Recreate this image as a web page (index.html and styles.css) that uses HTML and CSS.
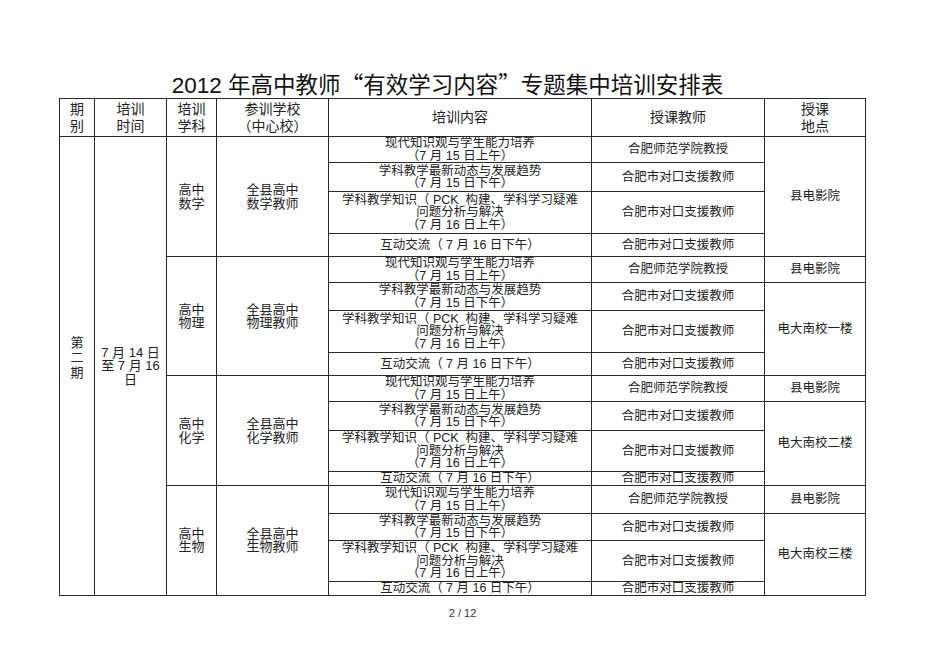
FILE: index.html
```html
<!DOCTYPE html>
<html lang="zh">
<head>
<meta charset="utf-8">
<link rel="stylesheet" href="styles.css">
</head>
<body>
<div class="page">
  <h1 class="title">2012 年高中教师<span class="q">“</span>有效学习内容<span class="q">”</span>专题集中培训安排表</h1>
  <table class="sched">
    <colgroup>
      <col class="c1"><col class="c2"><col class="c3"><col class="c4"><col class="c5"><col class="c6"><col class="c7">
    </colgroup>
    <thead>
      <tr class="hd">
        <th>期<br>别</th>
        <th>培训<br>时间</th>
        <th>培训<br>学科</th>
        <th>参训学校<br>（中心校）</th>
        <th>培训内容</th>
        <th>授课教师</th>
        <th>授课<br>地点</th>
      </tr>
    </thead>
    <tbody>
      <tr class="h25">
        <td rowspan="16" class="period">第<br>二<br>期</td>
        <td rowspan="16" class="time">7 月 14 日<br>至 7 月 16<br>日</td>
        <td rowspan="4" class="subj">高中<br>数学</td>
        <td rowspan="4" class="subj">全县高中<br>数学教师</td>
        <td>现代知识观与学生能力培养<br>（7 月 15 日上午）</td>
        <td>合肥师范学院教授</td>
        <td rowspan="4">县电影院</td>
      </tr>
      <tr class="h29">
        <td>学科教学最新动态与发展趋势<br>（7 月 15 日下午）</td>
        <td>合肥市对口支援教师</td>
      </tr>
      <tr class="h42">
        <td>学科教学知识（ PCK&nbsp; 构建、学科学习疑难<br>问题分析与解决<br>（7 月 16 日上午）</td>
        <td>合肥市对口支援教师</td>
      </tr>
      <tr class="h23">
        <td>互动交流（ 7 月 16 日下午）</td>
        <td>合肥市对口支援教师</td>
      </tr>

      <tr class="h26">
        <td rowspan="4" class="subj">高中<br>物理</td>
        <td rowspan="4" class="subj">全县高中<br>物理教师</td>
        <td>现代知识观与学生能力培养<br>（7 月 15 日上午）</td>
        <td>合肥师范学院教授</td>
        <td>县电影院</td>
      </tr>
      <tr class="h28">
        <td>学科教学最新动态与发展趋势<br>（7 月 15 日下午）</td>
        <td>合肥市对口支援教师</td>
        <td rowspan="3">电大南校一楼</td>
      </tr>
      <tr class="h42">
        <td>学科教学知识（ PCK&nbsp; 构建、学科学习疑难<br>问题分析与解决<br>（7 月 16 日上午）</td>
        <td>合肥市对口支援教师</td>
      </tr>
      <tr class="h23">
        <td>互动交流（ 7 月 16 日下午）</td>
        <td>合肥市对口支援教师</td>
      </tr>

      <tr class="h25">
        <td rowspan="4" class="subj">高中<br>化学</td>
        <td rowspan="4" class="subj">全县高中<br>化学教师</td>
        <td>现代知识观与学生能力培养<br>（7 月 15 日上午）</td>
        <td>合肥师范学院教授</td>
        <td>县电影院</td>
      </tr>
      <tr class="h29">
        <td>学科教学最新动态与发展趋势<br>（7 月 15 日下午）</td>
        <td>合肥市对口支援教师</td>
        <td rowspan="3">电大南校二楼</td>
      </tr>
      <tr class="h41">
        <td>学科教学知识（ PCK&nbsp; 构建、学科学习疑难<br>问题分析与解决<br>（7 月 16 日上午）</td>
        <td>合肥市对口支援教师</td>
      </tr>
      <tr class="h14">
        <td>互动交流（ 7 月 16 日下午）</td>
        <td>合肥市对口支援教师</td>
      </tr>

      <tr class="h28">
        <td rowspan="4" class="subj">高中<br>生物</td>
        <td rowspan="4" class="subj">全县高中<br>生物教师</td>
        <td>现代知识观与学生能力培养<br>（7 月 15 日上午）</td>
        <td>合肥师范学院教授</td>
        <td>县电影院</td>
      </tr>
      <tr class="h27">
        <td>学科教学最新动态与发展趋势<br>（7 月 15 日下午）</td>
        <td>合肥市对口支援教师</td>
        <td rowspan="3">电大南校三楼</td>
      </tr>
      <tr class="h41">
        <td>学科教学知识（ PCK&nbsp; 构建、学科学习疑难<br>问题分析与解决<br>（7 月 16 日上午）</td>
        <td>合肥市对口支援教师</td>
      </tr>
      <tr class="h12">
        <td>互动交流（ 7 月 16 日下午）</td>
        <td>合肥市对口支援教师</td>
      </tr>
    </tbody>
  </table>
  <div class="pageno">2 / 12</div>
</div>
</body>
</html>
```
FILE: styles.css
```css
html, body {
  margin: 0;
  padding: 0;
  background: #ffffff;
}
body {
  width: 950px;
  height: 672px;
  overflow: hidden;
  font-family: "Liberation Sans", "Noto Sans CJK SC", sans-serif;
  color: #222;
}
.page {
  width: 807px;
  margin-left: 59px;
  padding-top: 70px;
}
.title {
  margin: 0;
  padding-right: 30px;
  text-align: center;
  font-weight: normal;
  font-size: 22.5px;
  line-height: 27px;
  color: #111;
  height: 28px;
}
.title .q {
  font-family: "Noto Sans CJK SC", sans-serif;
}
.sched {
  border-collapse: collapse;
  table-layout: fixed;
  width: 807px;
}
.c1 { width: 35px; }
.c2 { width: 72px; }
.c3 { width: 50px; }
.c4 { width: 112px; }
.c5 { width: 263px; }
.c6 { width: 173px; }
.c7 { width: 101px; }

.sched th, .sched td {
  border: 1px solid #2a2a2a;
  padding: 0;
  text-align: center;
  vertical-align: middle;
  font-weight: normal;
  overflow: hidden;
  white-space: nowrap;
}
.sched th {
  font-size: 14px;
  line-height: 17px;
  color: #222;
}
.hd { height: 38px; }
.sched td {
  font-size: 12.5px;
  line-height: 12.5px;
}
.sched td.period {
  font-size: 13px;
  line-height: 15px;
  padding-bottom: 16px;
}
.sched td.time {
  font-size: 13px;
  line-height: 13.5px;
}
.sched td.subj {
  font-size: 13px;
  line-height: 13.5px;
}
.h12 { height: 12px; }
.h14 { height: 14px; }
.h23 { height: 23px; }
.h25 { height: 25px; }
.h26 { height: 26px; }
.h27 { height: 27px; }
.h28 { height: 28px; }
.h29 { height: 29px; }
.h41 { height: 41px; }
.h42 { height: 42px; }

.pageno {
  text-align: center;
  font-size: 11px;
  color: #333;
  margin-top: 11px;
}
```
